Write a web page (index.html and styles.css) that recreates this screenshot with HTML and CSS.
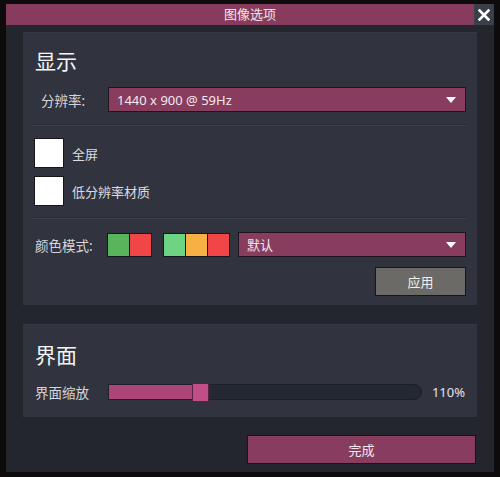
FILE: index.html
```html
<!DOCTYPE html>
<html lang="zh-CN">
<head>
    <meta charset="UTF-8">
    <title>图像选项</title>
    <link rel="stylesheet" href="styles.css">
</head>
<body>
    <div class="dialog">
        <div class="titlebar">
            <div class="title">图像选项</div>
            <div class="close">
                <svg width="12" height="12" viewBox="0 0 12 12"><path d="M1.5 1.5 L10.5 10.5 M10.5 1.5 L1.5 10.5" stroke="#fff" stroke-width="2.6" stroke-linecap="square"/></svg>
            </div>
        </div>
        <div class="content">
            <div class="panel panel-display">
                <h2>显示</h2>
                <div class="row res-row">
                    <span class="label">分辨率:</span>
                    <div class="select res-select">
                        <span>1440 x 900 @ 59Hz</span>
                        <svg class="arrow" width="10" height="6" viewBox="0 0 10 6"><path d="M0 0 H10 L5 6 Z" fill="#fff"/></svg>
                    </div>
                </div>
                <div class="sep"></div>
                <div class="check-row first">
                    <div class="checkbox"></div>
                    <span>全屏</span>
                </div>
                <div class="check-row">
                    <div class="checkbox"></div>
                    <span>低分辨率材质</span>
                </div>
                <div class="sep sep2"></div>
                <div class="row color-row">
                    <span class="label">颜色模式:</span>
                    <div class="swatches">
                        <div class="sw green"></div>
                        <div class="sw red"></div>
                    </div>
                    <div class="swatches">
                        <div class="sw lightgreen"></div>
                        <div class="sw orange"></div>
                        <div class="sw red"></div>
                    </div>
                    <div class="select mode-select">
                        <span>默认</span>
                        <svg class="arrow" width="10" height="6" viewBox="0 0 10 6"><path d="M0 0 H10 L5 6 Z" fill="#fff"/></svg>
                    </div>
                </div>
                <div class="apply-row">
                    <button class="btn-apply">应用</button>
                </div>
            </div>
            <div class="panel panel-ui">
                <h2>界面</h2>
                <div class="row slider-row">
                    <span class="label">界面缩放</span>
                    <div class="slider">
                        <div class="fill" style="width: 84px"></div>
                        <div class="thumb"></div>
                    </div>
                    <span class="value">110%</span>
                </div>
            </div>
            <div class="footer">
                <button class="btn-done">完成</button>
            </div>
        </div>
    </div>
</body>
</html>
```

FILE: styles.css
```css
body {
    margin: 0;
    background-color: #0e0b0d;
    font-family: "Noto Sans", "Noto Sans CJK SC", sans-serif;
    color: #dcdce0;
    font-size: 13px;
}
.dialog {
    margin: 4px 6px;
    width: 488px;
    height: 468px;
    background-color: #24262e;
}
.titlebar {
    display: flex;
    height: 21px;
}
.title {
    flex: 1;
    padding-left: 20px;
    background-color: #883c5d;
    color: #f1e4ea;
    text-align: center;
    line-height: 21px;
    font-size: 13px;
}
.close {
    width: 20px;
    background-color: #3b3f4a;
    display: flex;
    align-items: center;
    justify-content: center;
}
.content {
    padding: 8px 17px 0 17px;
}
.panel {
    background-color: #31343f;
    box-shadow: 0 -1px 0 #363946;
}
.panel h2 {
    margin: 0;
    font-size: 21px;
    font-weight: normal;
    line-height: 28px;
    color: #f4f4f6;
}
.panel-display {
    height: 272px;
    box-sizing: border-box;
    padding: 14px 11px 0 12px;
}
.row {
    display: flex;
    align-items: center;
}
.label {
    color: #d6d6da;
    font-size: 13.5px;
}
.res-row {
    margin-top: 12px;
    height: 25px;
}
.res-row .label {
    width: 73px;
    box-sizing: border-box;
    padding-left: 6px;
}
.select {
    height: 25px;
    box-sizing: border-box;
    background-color: #883d5f;
    border: 1px solid #1e1420;
    display: flex;
    align-items: center;
    justify-content: space-between;
    padding: 0 9px 0 8px;
    color: #f3e8ee;
}
.res-select {
    flex: 1;
}
.sep {
    margin-top: 12px;
    margin-left: -2px;
    height: 1px;
    background-color: #3f424e;
    border-top: 1px solid #2a2c35;
}
.check-row {
    display: flex;
    align-items: center;
    margin-top: 8px;
    margin-left: -1px;
}
.check-row.first {
    margin-top: 12px;
}
.checkbox {
    width: 28px;
    height: 28px;
    background-color: #ffffff;
    border: 1px solid #15161b;
    margin-right: 8px;
}
.sep2 {
    margin-top: 11px;
}
.color-row {
    margin-top: 13px;
    height: 25px;
}
.color-row .label {
    width: 72px;
}
.swatches {
    display: flex;
    border: 1px solid #16171c;
    margin-right: 11px;
}
.sw {
    width: 21px;
    height: 22px;
}
.sw + .sw {
    border-left: 1px solid #16171c;
}
.green { background-color: #59b55c; }
.red { background-color: #f04647; }
.lightgreen { background-color: #6cd482; }
.orange { background-color: #f6b043; }
.swatches + .swatches {
    margin-right: 8px;
}
.mode-select {
    flex: 1;
}
.apply-row {
    display: flex;
    justify-content: flex-end;
    margin-top: 10px;
}
.btn-apply {
    width: 91px;
    height: 29px;
    background-color: #6b6a66;
    border: 1px solid #17171a;
    color: #efefef;
    font-family: inherit;
    font-size: 13px;
}
.panel-ui {
    margin-top: 20px;
    height: 92px;
    box-sizing: border-box;
    padding: 16px 12px 0 12px;
}
.slider-row {
    margin-top: 15px;
    height: 16px;
}
.slider-row .label {
    width: 73px;
}
.slider {
    position: relative;
    width: 314px;
    height: 16px;
    box-sizing: border-box;
    background-color: #242833;
    border: 1px solid #1c1f28;
    border-radius: 0 8px 8px 0;
}
.fill {
    height: 14px;
    background-color: #ad4579;
    border-right: 1px solid #7a3056;
}
.thumb {
    position: absolute;
    left: 83px;
    top: -2px;
    width: 17px;
    height: 19px;
    background-color: #c04f88;
    border: 1px solid #5a2240;
    box-sizing: border-box;
}
.value {
    margin-left: 10px;
    color: #e4e4e8;
}
.footer {
    display: flex;
    justify-content: flex-end;
    margin-top: 18px;
    padding-right: 1px;
}
.btn-done {
    width: 229px;
    height: 29px;
    background-color: #883d5f;
    border: 1px solid #1c1218;
    color: #f3e8ee;
    font-family: inherit;
    font-size: 13px;
}
```
